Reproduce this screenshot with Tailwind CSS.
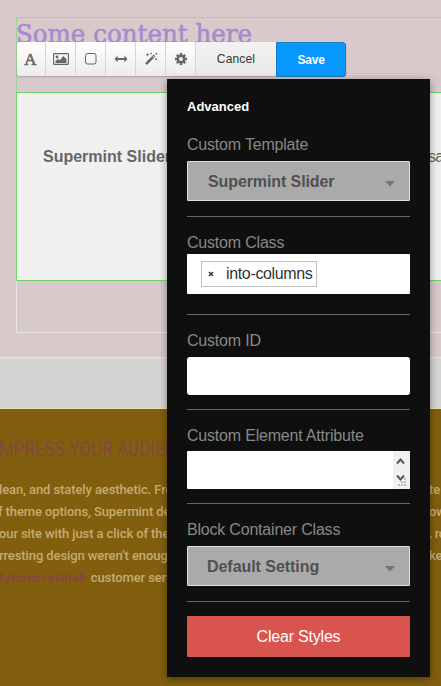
<!DOCTYPE html>
<html lang="en">
<head>
<meta charset="utf-8">
<title>Block design</title>
<script src="https://cdn.jsdelivr.net/npm/@tailwindcss/browser@4"></script>
</head>
<body class="relative h-[686px] w-[441px] overflow-hidden bg-[#d8cacb] font-['Liberation_Sans',Arial,sans-serif]">
<main class="flex h-[686px] flex-col overflow-hidden">
  <section class="h-[357px] shrink-0 pt-[17px] pl-4">
    <div class="h-[316px] border-l border-[#ebe5e5] border-b">
      <div class="-ml-px h-[75px] border-t border-l border-[#9ed39b]">
        <h1 class="pt-px font-['DejaVu_Serif',serif] text-[25px] leading-[32px] whitespace-nowrap text-[#aa8acb]"><svg class="block overflow-visible" width="238" height="30"><text x="-1" y="23.5" fill="#aa8acb" stroke="#aa8acb" stroke-width=".6" font-size="26" textLength="236" lengthAdjust="spacingAndGlyphs">Some content here</text></svg></h1>
      </div>
      <div class="-ml-px flex h-[189px] items-start justify-between border-y border-l border-[#6ed56b] bg-[#f0f0f0] pt-[54px] pl-[26px] text-[16px] leading-[20px] text-[#666]">
        <b class="whitespace-nowrap">Supermint Slider</b>
        <span class="w-[13px] overflow-hidden tracking-[-.8px] whitespace-nowrap">sa</span>
      </div>
    </div>
  </section>
  <section class="h-[52px] shrink-0 border-t border-b border-t-[#ebe5e5] border-b-[#f0dfb5] bg-[#d6d4d3]"></section>
  <section class="grow bg-[#825f0e] pt-[27px] font-[Roboto,sans-serif] text-[13px] leading-[22px] font-medium tracking-[-.1px] text-[#c4ab72]">
    <h2 class="-ml-[6px] h-[43px] text-[20px] leading-[26px] font-normal tracking-normal whitespace-nowrap text-[#84473f]"><svg class="block overflow-visible" width="205" height="26"><text x="0" y="20" fill="#84473f" font-size="20" textLength="204" lengthAdjust="spacingAndGlyphs">IMPRESS YOUR AUDIENCE</text></svg></h2>
    <div class="flex justify-between whitespace-nowrap"><p class="-ml-px">lean, and stately aesthetic. From</p><p class="w-[12px]">te</p></div>
    <div class="flex justify-between whitespace-nowrap"><p class="-ml-[2px]">f theme options, Supermint deli</p><p class="w-[12px]">ow</p></div>
    <div class="flex justify-between whitespace-nowrap"><p class="-ml-px">our site with just a click of the</p><p class="w-[12px] tracking-[-.5px]">. ro</p></div>
    <div class="flex justify-between whitespace-nowrap"><p class="-ml-px">rresting design weren’t enough</p><p class="w-[12px]">ke</p></div>
    <p class="-ml-[8px] whitespace-nowrap"><b class="font-extrabold tracking-[.65px] text-[#84473f]">Myconcretelab</b> customer serv</p>
  </section>
</main>

<div class="absolute top-[42px] left-[17px] flex h-[34px] rounded-[3px] bg-linear-to-b from-white to-[#ececec] text-[#666] shadow-[0_1px_2px_rgba(0,0,0,.2)]">
  <div class="flex w-[29px] items-center justify-center border-r border-[#d5d5d5]">
    <svg width="14" height="14" viewBox="0 0 14 14" fill="currentColor"><text x="6.5" y="12.6" text-anchor="middle" font-family="Liberation Serif, serif" font-size="17" stroke="currentColor" stroke-width=".6">A</text></svg>
  </div>
  <div class="flex w-[30px] items-center justify-center border-r border-[#d5d5d5]">
    <svg width="16" height="14" viewBox="0 0 16 14"><rect x=".6" y="1.6" width="14.8" height="10.8" rx=".6" fill="none" stroke="currentColor" stroke-width="1.1"/><circle cx="4" cy="5" r="1.4" fill="currentColor"/><path d="M2.5 11V9l2.5-2 2 1.2L10.3 4l3.2 3.2V11z" fill="currentColor"/></svg>
  </div>
  <div class="flex w-[30px] items-center justify-center border-r border-[#d5d5d5]">
    <svg width="12" height="12" viewBox="0 0 12 12"><rect x=".5" y=".5" width="10.5" height="10.5" rx="2" fill="none" stroke="currentColor"/></svg>
  </div>
  <div class="flex w-[30px] items-center justify-center border-r border-[#d5d5d5]">
    <svg width="14" height="10" viewBox="0 0 14 10" fill="currentColor"><path d="M.4 5 3.7 1.8V4h6.6V1.8L13.6 5l-3.3 3.2V6H3.7v2.2z"/></svg>
  </div>
  <div class="flex w-[30px] items-center justify-center border-r border-[#d5d5d5]">
    <svg width="14" height="14" viewBox="0 0 14 14"><path d="M2 12.2 10.6 3.4" stroke="currentColor" stroke-width="2.6"/><path d="m8.8 5.2 1.5-1.5" stroke="#f4f4f4" stroke-width="1"/><path d="M3.5 1.2v3M2 2.7h3M7 .8v1.6M6.2 1.6h1.6M12.4.8v2M11.4 1.8h2M12.2 6.2v2M11.2 7.2h2" stroke="currentColor" stroke-width=".8"/></svg>
  </div>
  <div class="flex w-[30px] items-center justify-center border-r border-[#d5d5d5]">
    <svg width="12" height="12" viewBox="0 0 12 12"><g stroke="currentColor" stroke-width="2.5"><path d="M6 0v3M6 9v3M0 6h3M9 6h3M1.8 1.8l2 2M8.2 8.2l2 2M10.2 1.8l-2 2M1.8 10.2l2-2"/></g><circle cx="6" cy="6" r="3.1" fill="none" stroke="currentColor" stroke-width="2.3"/></svg>
  </div>
  <button class="w-[80px] bg-linear-to-b from-[#f2f2f2] to-[#e9e9e9] text-[12px] tracking-[.15px] text-[#333]">Cancel</button>
  <button class="h-[35px] w-[70px] rounded-r-[3px] border border-[#167cc5] bg-[#0897fc] text-[12px] font-bold tracking-[-.2px] text-white">Save</button>
</div>

<aside class="absolute top-[79px] left-[167px] flex h-[598px] w-[263px] flex-col bg-[#0f0f0f] px-5 pt-[19px] text-[16px] leading-[20px] tracking-[-.2px] text-[#858989] shadow-[0_2px_8px_rgba(0,0,0,.4)]">
  <h3 class="text-[13px] leading-[18px] font-bold tracking-normal text-white">Advanced</h3>
  <div class="mt-[18px] flex h-[83px] flex-col border-b border-[#666]">
    <label class="mt-px">Custom Template</label>
    <div class="mt-[6px] flex h-[40px] items-center justify-between rounded-[1px] border border-[#e0e0e0] bg-[#aaa] pt-px pr-[14px] pl-5 font-bold tracking-[-.1px] text-[#505050]"><span>Supermint Slider</span><svg class="mt-[5px]" width="10" height="6"><path d="M0 0h10L5 5.5z" fill="#747474"/></svg></div>
  </div>
  <div class="flex h-[98px] flex-col border-b border-[#666] pt-[16px]">
    <label>Custom Class</label>
    <div class="mt-px flex h-[40px] items-center rounded-[1px] bg-white pl-[14px]">
      <div class="flex h-[26px] w-[116px] items-center border border-[#c0c0c0] pl-[6px] text-[#333]"><svg width="6" height="6"><path d="m1 1 4 4M5 1 1 5" stroke="#333" stroke-width="1.5"/></svg><span class="ml-3 tracking-[-.35px] whitespace-nowrap">into-columns</span></div>
    </div>
  </div>
  <div class="flex h-[95px] flex-col border-b border-[#666] pt-[16px]">
    <label>Custom ID</label>
    <div class="mt-[6px] h-[38px] rounded-[3px] bg-white"></div>
  </div>
  <div class="flex h-[94px] flex-col border-b border-[#666] pt-[16px]">
    <label class="whitespace-nowrap">Custom Element Attribute</label>
    <div class="mt-[5px] flex h-[38px] justify-end rounded-[1px] bg-white">
      <div class="w-[17px] bg-[#f0f0f0]"><svg width="17" height="38"><path d="m4 12.5 3.5-4 3.5 4M4 24.5l3.5 4 3.5-4" fill="none" stroke="#555" stroke-width="1.9"/><path d="M11 27h2v2h-2zM8 30h2v2H8zM11 30h2v2h-2zM5 33h2v2H5zM8 33h2v2H8zM11 33h2v2h-2z" fill="#bbb"/></svg></div>
    </div>
  </div>
  <div class="flex h-[98px] flex-col border-b border-[#666] pt-[16px]">
    <label>Block Container Class</label>
    <div class="mt-[6px] flex h-[40px] items-center justify-between rounded-[1px] border border-[#e0e0e0] bg-[#aaa] pt-px pr-[14px] pl-[19px] font-bold tracking-[-.05px] text-[#505050]"><span>Default Setting</span><svg class="mt-[5px]" width="10" height="6"><path d="M0 0h10L5 5.5z" fill="#747474"/></svg></div>
  </div>
  <button class="mt-[14px] h-[41px] rounded-[1px] bg-[#d9534f] text-white">Clear Styles</button>
</aside>
</body>
</html>
